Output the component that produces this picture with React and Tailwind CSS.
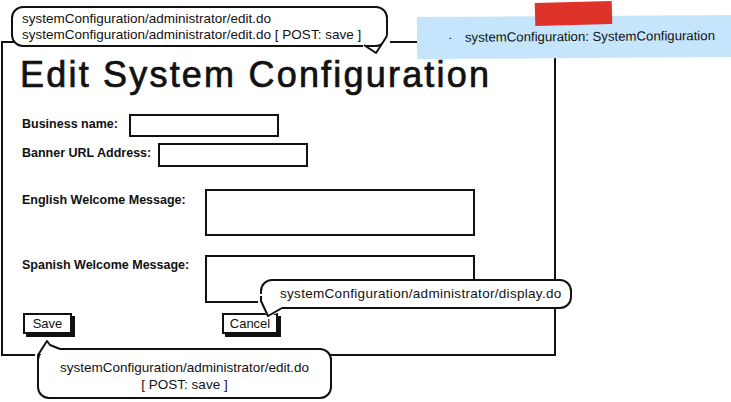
const font = { fontFamily: '"Liberation Sans", Arial, sans-serif' };

function Field({ label, labelW, inputW, inputH, mt, pt }) {
  return (
    <div className={`flex items-start ${mt}`}>
      <div className={`${labelW} ${pt} text-[12.5px] leading-[15px] font-bold text-[#111]`}>{label}</div>
      <div className={`${inputW} ${inputH} border-2 border-[#111] bg-white`} />
    </div>
  );
}

function Tail({ className, w, h, fill, line }) {
  return (
    <svg className={`absolute ${className}`} width={w} height={h} viewBox={`0 0 ${w} ${h}`}>
      <polygon points={fill} fill="#fff" />
      <polyline points={line} fill="none" stroke="#111" strokeWidth="2" strokeLinejoin="round" />
    </svg>
  );
}

export default function App() {
  return (
    <div className="relative w-[731px] h-[402px] bg-white overflow-hidden text-[#111]" style={font}>
      {/* main window */}
      <div className="ml-[1px] mt-[41px] w-[555px] h-[315px] border-2 border-[#111] bg-white">
        <h1 className="ml-[17px] mt-[14px] text-[36px] leading-[36px] tracking-[2.2px] font-normal [-webkit-text-stroke:0.7px_#111]">
          Edit System Configuration
        </h1>
        <div className="ml-[19px]">
          <Field label="Business name:" labelW="w-[107px]" inputW="w-[150px]" inputH="h-[23px]" mt="mt-[21px]" pt="pt-[3px]" />
          <Field label="Banner URL Address:" labelW="w-[136px]" inputW="w-[150px]" inputH="h-[24px]" mt="mt-[6px]" pt="pt-[3px]" />
          <Field label="English Welcome Message:" labelW="w-[183px]" inputW="w-[270px]" inputH="h-[47px]" mt="mt-[22px]" pt="pt-[4px]" />
          <Field label="Spanish Welcome Message:" labelW="w-[183px]" inputW="w-[270px]" inputH="h-[48px]" mt="mt-[19px]" pt="pt-[3px]" />
          <div className="flex mt-[10px] text-[13px]">
            <div className="ml-[1px] w-[49px] h-[21px] border-2 border-[#111] shadow-[3px_3px_0_#111] flex items-center justify-center">
              Save
            </div>
            <div className="ml-[150px] w-[56px] h-[21px] border-2 border-[#111] shadow-[3px_3px_0_#111] flex items-center justify-center">
              Cancel
            </div>
          </div>
        </div>
      </div>

      {/* top callout */}
      <div className="absolute left-[11px] top-[6px] w-[377px] h-[41px] border-2 border-[#111] rounded-[12px] bg-white pl-[9px] pt-[3px] text-[13.5px] leading-[16px]">
        <div>systemConfiguration/administrator/edit.do</div>
        <div>systemConfiguration/administrator/edit.do [ POST: save ]</div>
      </div>
      <Tail className="left-[360px] top-[32px]" w={30} h={24} fill="3,12 16,22 28,3 30,3 30,17 3,17" line="4,13 16,21 27,4" />

      {/* sticky note */}
      <div className="absolute left-[417px] top-[16px] w-[320px] h-[42px] bg-[#c4e5fb] -rotate-[0.4deg] flex items-center text-[13.2px]">
        <span className="ml-[31px] w-[17px]">·</span>
        <span>systemConfiguration: SystemConfiguration</span>
      </div>
      <div className="absolute left-[535px] top-[2px] w-[77px] h-[23px] bg-[#dd3328] -rotate-[1.5deg]" />

      {/* cancel callout */}
      <div className="absolute left-[260px] top-[279px] w-[312px] h-[30px] border-2 border-[#111] rounded-[12px] bg-white pl-[18px] flex items-center text-[13.5px] tracking-[0.3px]">
        systemConfiguration/administrator/display.do
      </div>
      <Tail className="left-[258px] top-[294px]" w={28} h={26} fill="0,0 4,0 24,13 24,17 10,23 0,10" line="3,2 3,7 10,22 24,14" />

      {/* save callout */}
      <div className="absolute left-[37px] top-[348px] w-[295px] h-[51px] border-2 border-[#111] rounded-[12px] bg-white flex flex-col items-center pt-[9px] text-[13.5px] leading-[17px]">
        <div>systemConfiguration/administrator/edit.do</div>
        <div>[ POST: save ]</div>
      </div>
      <Tail className="left-[34px] top-[338px]" w={30} h={24} fill="1,22 10,3 26,10 26,16 1,16" line="4,20 4,17 13,3 16,7 26,11" />
    </div>
  );
}
